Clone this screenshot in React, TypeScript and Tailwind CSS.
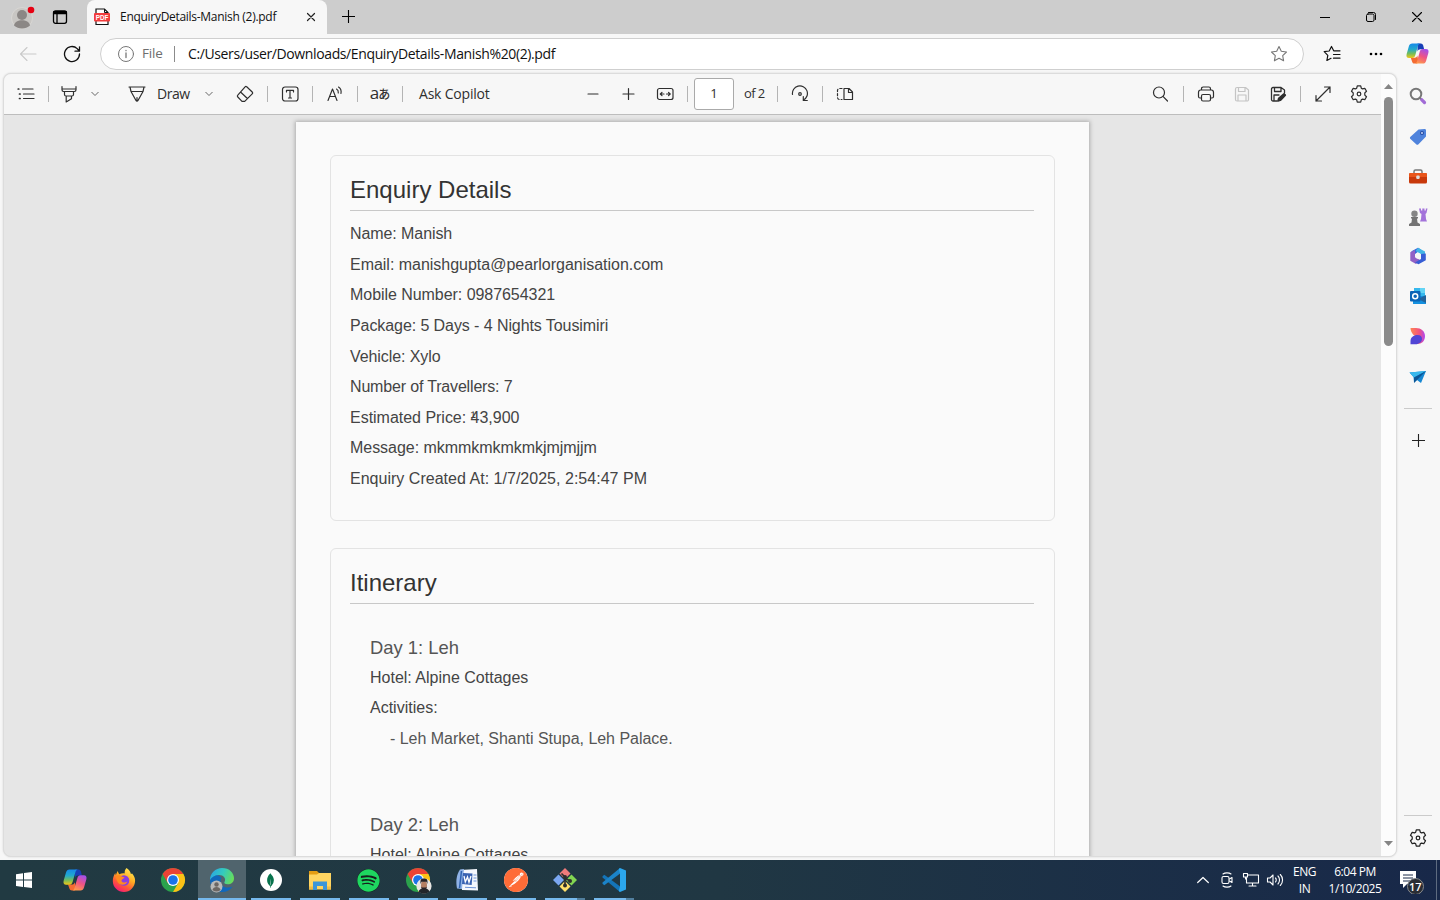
import React from "react";
import { FaSpotify } from "react-icons/fa";
import { SiPostman, SiMongodb } from "react-icons/si";

type P = { className?: string };
const ui = "font-['Open_Sans','Noto_Sans',sans-serif]";

function Line({ className = "", size = 18, sw = 1.2, children }: { className?: string; size?: number; sw?: number; children: React.ReactNode }) {
  return (
    <svg width={size} height={size} viewBox={`0 0 ${size} ${size}`} fill="none" stroke="currentColor" strokeWidth={sw} strokeLinecap="round" strokeLinejoin="round" className={`shrink-0 ${className}`}>
      {children}
    </svg>
  );
}

const Sep = ({ className = "" }: P) => <div className={`h-4 w-px shrink-0 bg-[#b4b4b4] ${className}`} />;

const Chevron = ({ className = "" }: P) => (
  <svg width="8" height="6" viewBox="0 0 8 6" fill="none" stroke="#666" strokeWidth="1" className={`shrink-0 ${className}`}>
    <path d="M.5 1 4 4.5 7.5 1" />
  </svg>
);

const Gear = ({ className = "" }: P) => (
  <Line className={className} sw={1.25}>
    <path d="M6.700 3.200 7.300.9h3.400l.6 2.300 1.200.7 2.300-.6 1.700 2.900-1.700 1.700v2.200l1.700 1.700-1.700 2.900-2.300-.6-1.200.7-.6 2.300H7.300l-.6-2.300-1.200-.7-2.300.6-1.700-2.900 1.700-1.700V7.900L1.500 6.200l1.700-2.900 2.300.6z" />
    <circle cx="9" cy="9" r="1.800" />
  </Line>
);

const Plus = ({ className = "", size = 12 }: P & { size?: number }) => (
  <svg width={size} height={size} viewBox="0 0 13 13" fill="none" stroke="currentColor" strokeWidth="1.1" className={`shrink-0 ${className}`}>
    <path d="M6.500 0v13M0 6.500h13" />
  </svg>
);

function Copilot({ id, size = 24 }: { id: string; size?: number }) {
  return (
    <svg width={size} height={size} viewBox="0 0 24 24" className="shrink-0">
      <defs>
        <linearGradient id={`${id}a`} x1="0" y1="0" x2="0" y2="1">
          <stop offset="0" stopColor="#1689ea" />
          <stop offset=".4" stopColor="#22a9cc" />
          <stop offset=".7" stopColor="#75bd5b" />
          <stop offset="1" stopColor="#f2c616" />
        </linearGradient>
        <linearGradient id={`${id}b`} x1=".7" y1="0" x2=".3" y2="1">
          <stop offset="0" stopColor="#a350ea" />
          <stop offset=".5" stopColor="#ef5484" />
          <stop offset="1" stopColor="#ff9a4b" />
        </linearGradient>
      </defs>
      <path d="M12 1.500h3.500c1.300 0 2 .8 2.400 2l1 4H15c-1.600 0-2.500.8-3 2.500z" fill="#173fb6" />
      <path d="M5 16.500h4c1.500 0 2.300-.8 2.800-2.300L13 20l-1.300 2.500H9c-1.500 0-2.200-.8-2.600-2z" fill="#f46b32" />
      <path d="M6.500 1.500h8.200c-1.300.4-1.900 1.400-2.300 2.800l-2.800 9.800c-.5 1.700-1.400 2.600-3.200 2.600H3.200C.8 16.700 0 15 .7 12.500L3 4.500c.6-2 1.600-3 3.500-3z" fill={`url(#${id}a)`} />
      <path d="M17.500 22.500H9.300c1.300-.4 1.900-1.400 2.300-2.800l2.800-9.800c.5-1.700 1.400-2.600 3.200-2.600h3.200c2.400 0 3.200 1.700 2.500 4.200L21 19.500c-.6 2-1.600 3-3.500 3z" fill={`url(#${id}b)`} />
    </svg>
  );
}

function Chrome({ person = false }: { person?: boolean }) {
  return (
    <svg width="28" height="28" viewBox="0 0 28 28">
      <circle cx="14" cy="14" r="12" fill="#2ba24c" />
      <path d="M3.600 8A12 12 0 0 1 24.400 8L14 8.500 8.800 17z" fill="#ea4335" />
      <path d="M24.400 8A12 12 0 0 1 14 26l5.200-9L14 8z" fill="#fbc116" />
      <circle cx="14" cy="14" r="6" fill="#fff" />
      <circle cx="14" cy="14" r="4.800" fill="#1a73e8" />
      {person && (
        <g>
          <circle cx="20" cy="20" r="7.600" fill="#e9e7e4" />
          <path d="M14.500 25.500c1-2.500 3-3 5.500-3s4.500.5 5.500 3a8 8 0 0 1-11 0z" fill="#22262b" />
          <ellipse cx="20" cy="19.300" rx="3" ry="4.200" fill="#b47f62" />
          <path d="M16.600 18c-.6-5 1-5.400 3.400-5.400s4 .4 3.400 5.400l-.9-2.300h-5zM17.300 20.500l1 1h3.400l1-1c0 2.500-1 3.800-2.700 3.800s-2.700-1.300-2.700-3.800z" fill="#252326" />
        </g>
      )}
    </svg>
  );
}

const Firefox = () => (
  <svg width="24" height="24" viewBox="0 0 24 24">
    <defs>
      <linearGradient id="ff" x1=".8" y1="0" x2=".25" y2="1">
        <stop offset="0" stopColor="#fff05a" />
        <stop offset=".4" stopColor="#ffae22" />
        <stop offset=".7" stopColor="#ff5738" />
        <stop offset="1" stopColor="#f5157b" />
      </linearGradient>
    </defs>
    <path d="M14.500 0c3 1.800 4 4 4.400 6l1.200-.6c2 2.300 3 4.500 3 7.300C23 19 18 24 12 24S.8 19.300.8 13c0-3 1-6 2.500-8l.5 2.300L5.500 3l1.700 3.200c2-.8 4-1 5.500-.7C12.500 3.500 13 1.500 14.500 0z" fill="url(#ff)" />
    <circle cx="12" cy="12.500" r="5.300" fill="#8a3ee0" />
    <path d="M3.500 8.500c3-2 5.500-1 6.500.3l2.500.4c0 1.400-2.800 1.600-3 3.200 0 2.500 3.600 2.700 5.800 1-1.300 4-7.500 4.700-10 0z" fill="#ff8a20" />
  </svg>
);

const Edge = () => (
  <svg width="26" height="26" viewBox="0 0 26 26">
    <defs>
      <linearGradient id="eg" x1="0" y1=".3" x2="1" y2=".6">
        <stop offset="0" stopColor="#2aa6e5" />
        <stop offset=".5" stopColor="#34cbbd" />
        <stop offset="1" stopColor="#69dd57" />
      </linearGradient>
    </defs>
    <path d="M1 13c0 7 5 12 12 12 5 0 8.500-2 10.500-5.500-5 2.500-12 .7-12-5.500 0-2 1-3 1-3C8 6 2 7 1 13z" fill="#1168bb" />
    <path d="M1 13C1 6 6.500 1 13 1c7.500 0 12 5 12 10.300 0 4-3 6-6.200 6-3 0-4-1-3.300-2.200C17.500 11.500 14.500 8 10 8c-4.200 0-7.500 2-9 5z" fill="url(#eg)" />
    <circle cx="7.500" cy="19.500" r="6" fill="#b9b9b9" />
    <circle cx="7.500" cy="17.500" r="2.200" fill="#6c6764" />
    <path d="M3.500 23c.3-4 7.700-4 8 0a6 6 0 0 1-8 0z" fill="#6c6764" />
  </svg>
);

const Folder = () => (
  <svg width="24" height="24" viewBox="0 0 24 24">
    <path d="M1 3h8l2 2h12v5H1z" fill="#e49d13" />
    <path d="M1 6.500h8l2-1.500h12v16.500H1z" fill="#ffd561" />
    <path d="M5 22v-8.500h14V22h-4v-4H9v4z" fill="#3b96da" />
    <path d="M1 18.500h4v3H1zM19 18.500h4v3h-4z" fill="#f1bd46" />
  </svg>
);

const Word = () => (
  <svg width="24" height="24" viewBox="0 0 24 24">
    <path d="M5 2 22 1l1 21.500L7 22z" fill="#f4f7fd" />
    <path d="M5 1.500 9 1 7 21l-5-.5C.8 14 1 7 5 1.500z" fill="#8fb2e6" />
    <path d="M6.500 3 4.500 20" stroke="#2f62b1" strokeWidth="1.500" />
    <path d="m8 5 9.500.5-.8 11.500L7 16z" fill="#3a63b2" />
    <path d="m9 8 1.300 6 2.200-5 1.500 5.300 2-6.300" stroke="#fff" strokeWidth="1.300" fill="none" />
    <path d="M18.500 7h3M18.500 10h3M18.500 13h3M10 19.300l11 .5" stroke="#6d94d7" strokeWidth="1" />
  </svg>
);

const Git = () => (
  <svg width="26" height="26" viewBox="0 0 26 26">
    <path d="m13 1 5.500 5.500L13 12 7.500 6.500z" fill="#f07b7b" />
    <path d="m6.500 7.500 5.500 5.500-5.500 5.500L1 13z" fill="#7ba7f2" />
    <path d="m19.500 7.500L25 13l-5.500 5.500L14 13z" fill="#82d652" />
    <path d="m13 14 5.500 5.500L13 25l-5.500-5.500z" fill="#ffe06b" />
    <path d="M9.500 6.500 13 10v9M13 11l5 3" stroke="#2d2d2d" strokeWidth="1.600" fill="none" />
    <circle cx="13" cy="10" r="2" fill="#2d2d2d" />
    <circle cx="18" cy="14" r="2" fill="#2d2d2d" />
    <circle cx="13" cy="18.500" r="2" fill="#2d2d2d" />
  </svg>
);

const VSCode = () => (
  <svg width="24" height="24" viewBox="0 0 24 24">
    <path d="M.5 8.300 2.300 6.700l16.200 12L18 24 .5 9.500z" fill="#1474b8" />
    <path d="M.5 15.700l1.800 1.600 16.200-12L18 0 .5 14.500z" fill="#1b83c8" />
    <path d="m18 0 6 2.500v19L18 24l-1.200-1 1.200-4.500v-13L16.800 1z" fill="#2ba7ee" />
  </svg>
);

function TaskIcon({ children, active = false, open = false, stacked = false }: { children: React.ReactNode; active?: boolean; open?: boolean; stacked?: boolean }) {
  return (
    <div className="flex h-10 w-[49px] shrink-0 justify-center">
      <div className={active ? "flex h-10 w-12 flex-col items-center bg-[#50646d]" : "flex h-10 w-10 flex-col items-center"}>
        <div className="flex h-[38px] items-center justify-center pt-0.5">{children}</div>
        {(open || active) && (
          <div className="flex h-0.5 w-full bg-[#76b9ed]">{stacked && <div className="ml-auto h-0.5 w-2 bg-[#527f9e]" />}</div>
        )}
      </div>
    </div>
  );
}

const SideItem = ({ children }: { children: React.ReactNode }) => <div className="flex h-10 items-center justify-center">{children}</div>;

function TitleBar() {
  return (
    <div className="flex h-[34px] shrink-0 bg-[#cdcdcd]">
      <div className="flex w-[87px] shrink-0 items-center">
        <svg width="24" height="26" viewBox="0 0 24 26" className="mb-px ml-[11px]">
          <circle cx="11" cy="14" r="10.500" fill="#c8c6c3" stroke="#d9d7d4" />
          <circle cx="11" cy="11" r="5" fill="#8b8785" />
          <path d="M3 21.500c1-7 15-7 16 0-4 4-12 4-16 0z" fill="#8b8785" />
          <circle cx="20" cy="6" r="3.300" fill="#e60012" />
        </svg>
        <Line size={16} sw={1.3} className="ml-[17px] text-black">
          <rect x="1.500" y="1.800" width="13" height="12.500" rx="2" />
          <path d="M2 3h12M2 4.300h12" strokeWidth="2" />
          <path d="M5 5v9" />
        </Line>
      </div>
      <div className="flex w-60 shrink-0 items-center rounded-t-lg bg-[#f7f7f7]">
        <svg width="16" height="18" viewBox="0 0 16 18" className="ml-[7px] shrink-0">
          <path d="M2 1h8.500L14 4.500v12H2z" fill="#fff" stroke="#111" strokeWidth="1.200" />
          <path d="M10.500 1v3.500H14" fill="none" stroke="#111" />
          <rect x="0" y="5" width="16" height="8.500" rx="1" fill="#f23c3c" />
          <text x="8" y="11.600" textAnchor="middle" fontSize="6.300" fontWeight="700" fill="#fff" fontFamily="Liberation Sans">PDF</text>
        </svg>
        <span className="ml-[10px] w-[180px] text-xs tracking-[-0.29px] whitespace-nowrap text-[#111]">EnquiryDetails-Manish (2).pdf</span>
        <Line size={10} sw={1.2} className="ml-[6px] text-[#222]"><path d="m1.500 1.500 7 7M8.500 1.500l-7 7" /></Line>
      </div>
      <Plus size={13} className="mt-[10px] ml-[15px] text-black" />
      <div className="ml-auto flex items-center gap-[36px] pr-[18px] text-black">
        <Line size={10} sw={1}><path d="M0 5.500h10" /></Line>
        <Line size={10} sw={1}><rect x=".5" y="2" width="7.500" height="7.500" rx="1.500" /><path d="M2.500.5h5a2 2 0 0 1 2 2v5" /></Line>
        <Line size={10} sw={1.1}><path d="m.5.5 9 9M9.500.5l-9 9" /></Line>
      </div>
    </div>
  );
}

function AddressBar() {
  return (
    <div className="flex h-[39px] shrink-0 items-center">
      <Line className="ml-[19px] text-[#c9c9c9]" sw={1.1}><path d="M17 9H1.500M8 2.500 1.500 9 8 15.500" /></Line>
      <Line className="ml-[26px] text-[#111]" sw={1.3}><path d="M16.500 9a7.500 7.500 0 1 1-2.300-5.400L16.300 6M16.500 1.800V6.200H12" /></Line>
      <div className="ml-[19px] flex h-8 w-[1204px] shrink-0 items-center rounded-full border border-[#cfcfcf] bg-white">
        <Line size={16} sw={1} className="ml-[17px] text-[#777]"><circle cx="8" cy="8" r="7.500" /><path d="M8 7v4.500M8 4.500v.2" strokeWidth="1.300" /></Line>
        <span className="ml-2 w-[31px] text-[13.500px] tracking-[-0.2px] text-[#6e6e6e]">File</span>
        <div className="ml-px h-4 w-px bg-[#8b8b8b]" />
        <span className="ml-[13px] text-sm tracking-[-0.38px] whitespace-nowrap text-[#111]">C:/Users/user/Downloads/EnquiryDetails-Manish%20(2).pdf</span>
        <Line className="mr-[15px] ml-auto text-[#777]" sw={1.1}><path d="m9 1.500 2.300 4.800 5.200.7-3.800 3.600.9 5.200L9 13.300l-4.600 2.500.9-5.200L1.500 7l5.200-.7z" /></Line>
      </div>
      <Line className="ml-[19px] text-[#111]" sw={1.2}><path d="M11.500 5.800h-.8L8.500 1.500 6.200 6l-5 .7 3.600 3.600-.9 5.200L8 13.300M11.500 5.800H17M10.500 9.500H17M10.500 13.200H17" /></Line>
      <svg width="14" height="4" viewBox="0 0 14 4" className="ml-[28px] shrink-0"><circle cx="2" cy="2" r="1.300" /><circle cx="7" cy="2" r="1.300" /><circle cx="12" cy="2" r="1.300" /></svg>
      <div className="ml-[23px]"><Copilot id="top" size={23} /></div>
    </div>
  );
}

function Toolbar() {
  return (
    <div className="flex h-[41px] shrink-0 items-center border-b border-[#bdbdbd] bg-[#f7f7f7] text-[#2f2f2f]">
      <Line className="ml-[13px]"><path d="M5.500 4H16M6.500 9H17M6.500 13.500H17" /><path d="M1.200 4h.6M2.500 9h.6M2.500 13.500h.6" strokeWidth="1.700" /></Line>
      <Sep className="ml-[13px]" />
      <Line className="ml-[11px]"><path d="M2 1.500v3.300C2 6 2.500 6.500 3.500 6.500h11C15.500 6.500 16 6 16 4.800V1.500M2 4h14M4.500 6.500v3c0 1 .5 1.500 1.500 1.500h6c1 0 1.500-.5 1.500-1.500v-3M6.200 11v6l5.300-3.200V11" /></Line>
      <Chevron className="ml-[13px]" />
      <Line className="ml-[29px]"><path d="M1 2h16M2 2l1 4.500L8 15.500c.5.900 1.500.9 2 0L15 6.500 16 2M3.500 6.500h11M9 16v-3.500" /></Line>
      <span className="ml-[11px] w-10 text-sm tracking-[-0.5px]">Draw</span>
      <Chevron className="ml-2" />
      <Line className="ml-[23px]"><path d="m10.700 1.800 5.500 5.200c.6.600.6 1.200 0 1.800l-7.500 7.500H6L1.800 12c-.6-.6-.6-1.200 0-1.800l7.300-8.400c.5-.5 1.100-.5 1.600 0zM4.800 7.200l6.600 6.300" /></Line>
      <Sep className="ml-[13px]" />
      <Line className="ml-[13px]"><rect x="1.500" y="2" width="15.500" height="14" rx="2.500" /><path d="M5.500 7V5.300h7V7M9 5.500v7.500M7.500 13h3" /></Line>
      <Sep className="ml-[13px]" />
      <Line className="ml-[13px]" sw={1.15}><path d="m2 15.500 4.500-11.500L11 15.500M3.500 11.500h6M10.500 4c1.500.8 2 2 1.800 4M12.500 2c2.300 1.300 3 3.300 2.500 6.500" /></Line>
      <Sep className="ml-[13px]" />
      <span className="ml-3 flex w-5 items-baseline justify-center pb-1 font-['Open_Sans','Noto_Sans_CJK_JP',sans-serif] text-[17px] leading-none"><span>a</span><span className="-ml-px text-[12px] font-medium">あ</span></span>
      <Sep className="ml-3" />
      <span className="ml-4 w-20 text-sm tracking-[-0.2px] whitespace-nowrap">Ask Copilot</span>
      <Line className="ml-[85px]" sw={1.1}><path d="M4 9h10" /></Line>
      <Line className="ml-[17px]" sw={1.2}><path d="M9.500 3.500v11M4 9h11" /></Line>
      <Line className="ml-[19px]"><rect x="1.500" y="3.500" width="15.500" height="11" rx="2" /><path d="M8 9H4.500M6 7.300 4.300 9 6 10.700M10.500 9H14M12.500 7.300 14.200 9l-1.700 1.700" /></Line>
      <Sep className="ml-[13px]" />
      <div className="ml-1.5 flex h-8 w-10 shrink-0 items-center justify-center rounded-[3px] border border-[#aaa] bg-white text-[13px]">1</div>
      <span className="ml-[10px] w-6 text-[13px] tracking-[-0.6px] whitespace-nowrap">of 2</span>
      <Sep className="ml-[9px]" />
      <Line className="ml-[13px]"><path d="M1.500 9.500A7.500 7.500 0 1 1 12.500 15M12.300 11.500v4h4" /><circle cx="9" cy="9" r="1.300" /></Line>
      <Sep className="ml-[13px]" />
      <Line className="ml-[13px]"><path d="M8 3.500v11h8.500V7L13 3.500zM12.500 3.500v4h4" /><path d="M6 3.500H3.500a2 2 0 0 0-2 2v7a2 2 0 0 0 2 2H6" strokeDasharray="2.200 2" /></Line>
      <Line className="ml-auto"><circle cx="8" cy="7.500" r="5.500" /><path d="m12.200 11.700 4.300 4.300" /></Line>
      <Sep className="ml-[14px]" />
      <Line className="ml-[13px]"><path d="M4.500 5V3.800C4.500 2.700 5 2 6.200 2h5.600c1.200 0 1.700.7 1.700 1.800V5M4.500 13H3a1.500 1.500 0 0 1-1.500-1.500V7.500c0-1.500.8-2.500 2.200-2.500h10.600c1.400 0 2.200 1 2.200 2.500v4A1.500 1.500 0 0 1 15 13h-1.500" /><rect x="4.500" y="9.500" width="9" height="6.500" rx="1.500" /></Line>
      <Line className="ml-[18px] text-[#c4c4c4]"><path d="M4 2.500h8.500L15.500 5v9.500a1.500 1.500 0 0 1-1.500 1.500H4a1.500 1.500 0 0 1-1.500-1.500V4A1.500 1.500 0 0 1 4 2.500zM5.500 2.500v4H12v-4M5 16v-6h8v6" /></Line>
      <Line className="ml-[18px]" sw={1.3}><path d="M8 16H4a1.500 1.500 0 0 1-1.500-1.500V4A1.500 1.500 0 0 1 4 2.500h8L15.500 5v3M5.500 2.500v4H12v-4M5 16v-6h5" /><path d="m9 16 .7-2.500 5.300-4.700 1.300 1.300-5 5.200z" fill="currentColor" strokeWidth="1.700" /></Line>
      <Sep className="ml-[13px]" />
      <Line className="ml-[13px]"><path d="m2 16 14-14M10.500 2H16v5.500M2 10.500V16h5.500" /></Line>
      <Gear className="mr-[13px] ml-[18px]" />
    </div>
  );
}

const details = [
  { text: "Name: Manish", track: "tracking-[-0.08px]" },
  { text: "Email: manishgupta@pearlorganisation.com", track: "tracking-[-0.02px]" },
  { text: "Mobile Number: 0987654321", track: "tracking-[-0.05px]" },
  { text: "Package: 5 Days - 4 Nights Tousimiri", track: "tracking-[-0.08px]" },
  { text: "Vehicle: Xylo", track: "tracking-[-0.08px]" },
  { text: "Number of Travellers: 7", track: "tracking-[-0.17px]" },
  { text: "", track: "tracking-[-0.02px]" },
  { text: "Message: mkmmkmkmkmkjmjmjjm", track: "tracking-[-0.04px]" },
  { text: "Enquiry Created At: 1/7/2025, 2:54:47 PM", track: "tracking-[0.02px]" },
];

function Document() {
  return (
    <div className="mt-[7px] ml-[292px] h-[760px] w-[793px] shrink-0 bg-[#fafafa] px-[34px] pt-[33px] font-['Liberation_Sans',sans-serif] text-base text-[#444] shadow-[0_0_4px_1px_rgba(0,0,0,0.25)]">
      <div className="h-[366px] rounded-md border border-[#e3e3e3] pr-5 pl-[19px]">
        <h1 className="h-[55px] border-b border-[#c8c8c8] pt-[18px] text-2xl leading-8 text-[#333]">Enquiry Details</h1>
        <div className="pt-2">
          {details.map((d, i) => (
            <div key={i} className={`h-[30.65px] leading-[30.65px] whitespace-pre ${d.track}`}>
              {d.text || (
                <>
                  Estimated Price: <span className="relative">43,900<span className="absolute top-0 left-0 leading-none">¹</span></span>
                </>
              )}
            </div>
          ))}
        </div>
      </div>
      <div className="mt-[27px] h-[420px] rounded-md border border-[#e3e3e3] pr-5 pl-[19px]">
        <h2 className="h-[55px] border-b border-[#c8c8c8] pt-[18px] text-2xl leading-8 text-[#333]">Itinerary</h2>
        <div className="ml-5 pt-[29px]">
          <h3 className="h-[30px] text-[18.400px] leading-[30px] text-[#555]">Day 1: Leh</h3>
          <p className="h-[30px] leading-[30px]">Hotel: Alpine Cottages</p>
          <p className="h-[31px] leading-[30px]">Activities:</p>
          <p className="ml-5 h-[30px] leading-[30px] tracking-[-0.03px] text-[#555]">- Leh Market, Shanti Stupa, Leh Palace.</p>
          <h3 className="mt-[56px] h-[30px] text-[18.400px] leading-[30px] text-[#555]">Day 2: Leh</h3>
          <p className="h-[30px] leading-[30px]">Hotel: Alpine Cottages</p>
        </div>
      </div>
    </div>
  );
}

function Sidebar() {
  return (
    <div className="flex w-[42px] shrink-0 flex-col pt-[3px] text-[#222]">
      <SideItem><svg width="18" height="18" viewBox="0 0 18 18" fill="none"><circle cx="7" cy="7" r="5.300" stroke="#777" strokeWidth="2" /><path d="m10.800 10.800 2 2" stroke="#777" strokeWidth="2" /><path d="m12.800 12.800 2.700 2.700" stroke="#a16bd6" strokeWidth="3.200" strokeLinecap="round" /></svg></SideItem>
      <SideItem><svg width="18" height="18" viewBox="0 0 18 18" className="mt-px"><path d="m9.500 1.500 6-.5c1 0 1.500.5 1.500 1.500v6L9.500 16.200c-.8.800-1.500.8-2.300 0L1.500 11c-.8-.8-.8-1.500 0-2.300z" fill="#4f83dc" /><circle cx="13" cy="5" r="2" fill="#244ba3" /><circle cx="13" cy="5" r=".9" fill="#d8e5ff" /></svg></SideItem>
      <SideItem><svg width="18" height="18" viewBox="0 0 18 18" className="mt-px"><path d="M5 6V3.500C5 2.500 5.500 2 6.500 2h5c1 0 1.500.5 1.500 1.500V6" fill="none" stroke="#777" strokeWidth="1.500" /><rect y="5" width="18" height="10.500" rx="1.500" fill="#c8390b" /><path d="M0 6.500C0 5.500.5 5 1.500 5h15c1 0 1.500.5 1.500 1.500V9H0z" fill="#e9551a" /><rect x="7.200" y="7.500" width="3.500" height="3.500" rx="1.200" fill="#ddd" /></svg></SideItem>
      <SideItem><svg width="20" height="20" viewBox="0 0 20 20" className="mt-px"><path d="M11 1.500h2v2h1.300v-2h2.200v2h1.300v-2h1.700l-1 4.500-1 1 .5 5 1 2.500h-7l1-2.500.5-5-1.500-1z" fill="#a373da" /><circle cx="6.500" cy="6.800" r="3.200" fill="#858585" /><path d="M3 10h7v1.500H9l.5 4L12 17v2H1v-2l2.500-1.500.5-4H3z" fill="#747474" /></svg></SideItem>
      <SideItem><svg width="18" height="18" viewBox="0 0 18 18"><path d="M9 .8 2.500 4.200v7L6 13V7l6-4.500z" fill="#3865db" /><path d="m9 .8 7 3.700v5L12 11V7L6.500 4z" fill="#43b5e5" /><path d="M1.300 5.200 6 3v7l5 3-4 4-5.700-3.300z" fill="#9161c6" /><path d="M16.800 6.500v6.700L9.500 17.300 6 15.500l6-3.500V7z" fill="#375ed5" /><circle cx="9" cy="9" r="2.800" fill="#f7f7f7" /></svg></SideItem>
      <SideItem><svg width="18" height="18" viewBox="0 0 18 18"><path d="M5 1h11v10H5z" fill="#35b8ed" /><path d="M11 1h5v5h-5z" fill="#63d4f5" /><path d="M4 9h13v8H4z" fill="#1490df" /><path d="m9 12 8-4v8z" fill="#23639b" /><rect x="1" y="4" width="10.500" height="10.500" rx="1" fill="#0b64b6" /><circle cx="6.200" cy="9.200" r="2.500" fill="none" stroke="#fff" strokeWidth="1.500" /></svg></SideItem>
      <SideItem><svg width="18" height="18" viewBox="0 0 18 18"><defs><linearGradient id="ds"><stop stopColor="#ff8752" /><stop offset=".6" stopColor="#f2527e" /><stop offset="1" stopColor="#b147ef" /></linearGradient></defs><path d="M1.500 1h5.500c5 0 9 3 9 8s-3 8-8 8l1-7C6 10 1.500 6 1.500 1z" fill="url(#ds)" /><path d="M1.500 17.300V14c0-3.500 3-6 7-6 3 0 4.500 1.500 4.500 3.800 0 3.200-3 5.500-6.500 5.500z" fill="#5145d5" /></svg></SideItem>
      <SideItem><svg width="18" height="18" viewBox="0 0 18 18" className="mt-px"><path d="m.5 4.500 16.500-1.500-5 12-4-3-3 2.500L4.500 9z" fill="#1687d2" /><path d="m17 3-12 6.500L.5 4.500z" fill="#37b8ed" /><path d="m5 9.500 12-6.500-8.500 8.500L5 15z" fill="#0b5797" /></svg></SideItem>
      <div className="mx-auto mt-3 h-px w-7 shrink-0 bg-[#cbcbcb]" />
      <Plus className="mx-auto mt-[25px]" size={13} />
      <div className="mx-auto mt-auto h-px w-7 shrink-0 bg-[#cbcbcb]" />
      <Gear className="mx-auto mt-[13px] mb-[13px]" />
    </div>
  );
}

function Taskbar() {
  return (
    <div className="flex h-10 shrink-0 bg-linear-to-r from-[#213a42] via-[#203743] to-[#182849] text-white">
      <div className="flex w-[50px] shrink-0 items-center justify-center pr-[2px]">
        <svg width="16" height="16" viewBox="0 0 16 16" fill="#fff"><path d="M0 2.300 7 1.200v6.400H0zM8 1l8-1v7.600H8zM0 8.600h7V15l-7-1zM8 8.600h8V16l-8-1z" /></svg>
      </div>
      <TaskIcon><Copilot id="task" /></TaskIcon>
      <TaskIcon><Firefox /></TaskIcon>
      <TaskIcon><Chrome /></TaskIcon>
      <TaskIcon active><Edge /></TaskIcon>
      <TaskIcon open><div className="flex size-[22px] items-center justify-center rounded-full bg-white"><SiMongodb size={15} color="#08734d" /></div></TaskIcon>
      <TaskIcon open><Folder /></TaskIcon>
      <TaskIcon open><div className="rounded-full bg-[#17201d]"><FaSpotify size={23} color="#1ed760" /></div></TaskIcon>
      <TaskIcon open><Chrome person /></TaskIcon>
      <TaskIcon open><Word /></TaskIcon>
      <TaskIcon open><div className="rounded-full bg-white"><SiPostman size={24} color="#ff6c37" /></div></TaskIcon>
      <TaskIcon open stacked><Git /></TaskIcon>
      <TaskIcon open stacked><VSCode /></TaskIcon>
      <div className="ml-auto flex items-center">
        <Line size={12} sw={1.2}><path d="m.7 8.500 5.300-5 5.300 5" /></Line>
        <Line size={16} sw={1.1} className="ml-[10px]"><rect x="3" y="4.500" width="7" height="7" rx="1.500" /><path d="m10.500 7 2.500-1.500v5L10.500 9M4 2c2-1.500 6-1.500 8 0M4 14c2 1.500 6 1.500 8 0" /></Line>
        <Line size={18} sw={1.1} className="ml-[7px]"><path d="M6 4H16.500v8H4.500V7M10.500 12v3M7 15h7M1.500 2.500h4v3.500h-4zM3.500 6v2" /></Line>
        <Line size={18} sw={1.1} className="ml-[6px]"><path d="M1.500 7H4l3-3v10l-3-3H1.500zM9.500 7c1 1 1 3 0 4M12 5c2 2 2 6 0 8M14.300 3.500c3 3 3 8 0 11" /></Line>
        <div className="ml-[7px] flex w-[27px] flex-col items-center text-xs leading-[17px] tracking-[-0.4px]"><span>ENG</span><span>IN</span></div>
        <div className="ml-[8px] flex w-[58px] flex-col items-center text-xs leading-[17px] tracking-[-0.45px] whitespace-nowrap"><span>6:04 PM</span><span>1/10/2025</span></div>
        <svg width="28" height="28" viewBox="0 0 28 28" className="ml-[14px]">
          <path d="M2 5h16v13H9l-4 4v-4H2z" fill="#fff" />
          <path d="M5 9h10M5 12h10M5 15h7" stroke="#1b2b48" />
          <circle cx="17.500" cy="20.500" r="8" fill="#292d34" stroke="#87898d" />
          <text x="17.300" y="24.500" textAnchor="middle" fontSize="11" fontWeight="600" fill="#fff" fontFamily="Open Sans">17</text>
        </svg>
        <div className="ml-[10px] h-10 w-px bg-[#5e6b80]" />
        <div className="w-[3px]" />
      </div>
    </div>
  );
}

export default function App() {
  return (
    <div className={`flex h-[900px] w-[1440px] flex-col overflow-hidden bg-[#f7f7f7] ${ui}`}>
      <TitleBar />
      <AddressBar />
      <div className="flex h-[787px] shrink-0 pr-px">
        <div className="ml-[3px] flex h-[784px] w-[1394px] shrink-0 overflow-hidden rounded-lg border border-[#dcdcdc] bg-[#e6e6e6] shadow-[0_0_2px_rgba(0,0,0,0.15)]">
          <div className="flex w-[1377px] shrink-0 flex-col overflow-hidden">
            <Toolbar />
            <Document />
          </div>
          <div className="flex w-[15px] shrink-0 flex-col items-center bg-[#fcfcfc] py-[10px]">
            <svg width="9" height="5" viewBox="0 0 9 5" fill="#858585"><path d="M0 5 4.500 0 9 5z" /></svg>
            <div className="mt-2 h-[249px] w-[9px] rounded-full bg-[#8b8b8b]" />
            <svg width="9" height="5" viewBox="0 0 9 5" fill="#858585" className="mt-auto"><path d="M0 0h9L4.500 5z" /></svg>
          </div>
        </div>
        <Sidebar />
      </div>
      <Taskbar />
    </div>
  );
}
